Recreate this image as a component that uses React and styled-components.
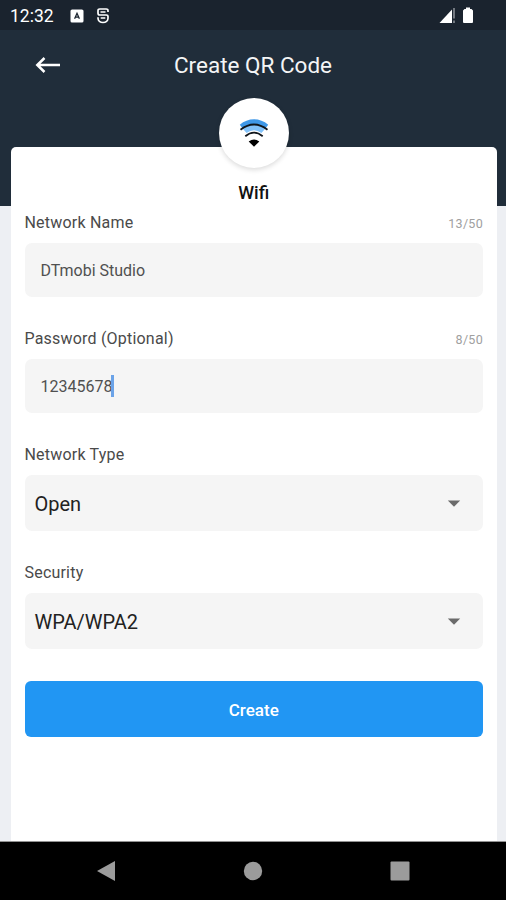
import React from "react";
import { useState } from "react";
import styled, { createGlobalStyle } from "styled-components";

const GlobalStyle = createGlobalStyle`
  body {
    margin: 0;
    font-family: Roboto, "Liberation Sans", sans-serif;
  }

  * {
    box-sizing: border-box;
  }
`;

const Screen = styled.div`
  display: flex;
  flex-direction: column;
  width: 506px;
  height: 900px;
  overflow: hidden;
  background-color: #edeff3;
`;

const StatusBar = styled.div`
  display: flex;
  align-items: center;
  justify-content: space-between;
  flex: none;
  height: 30px;
  padding: 1px 32px 0 10px;
  background-color: #1a232e;
  color: #ffffff;
`;

const StatusGroup = styled.div`
  display: flex;
  align-items: center;
`;

const Clock = styled.span`
  width: 60px;
  font-size: 17.5px;
  line-height: 20px;
`;

const Header = styled.header`
  flex: none;
  height: 176px;
  background-color: #202d3a;
`;

const TitleBar = styled.div`
  display: grid;
  grid-template-columns: 60px 1fr 60px;
  align-items: center;
  height: 70px;
  padding: 0 18px;
`;

const BackButton = styled.button`
  display: flex;
  align-items: center;
  justify-content: center;
  height: 40px;
  padding: 0;
  border: 0;
  background: none;
  cursor: pointer;
`;

const Title = styled.h1`
  margin: 0;
  text-align: center;
  color: #f4f5f6;
  font-size: 22.5px;
  font-weight: 400;
  line-height: 28px;
`;

const Card = styled.main`
  position: relative;
  flex: 1;
  margin: -59px 9px 0 10.5px;
  padding: 34px 14px 0;
  border-radius: 5px 5px 0 0;
  background-color: #ffffff;
`;

const TypeBadge = styled.div`
  position: absolute;
  top: -49px;
  left: 50%;
  display: flex;
  align-items: center;
  justify-content: center;
  width: 70px;
  height: 70px;
  border-radius: 50%;
  background-color: #ffffff;
  box-shadow: 0 2px 5px rgba(0, 0, 0, 0.14);
  transform: translateX(-50%);
`;

const TypeName = styled.h2`
  margin: 0;
  height: 24px;
  text-align: center;
  color: #111111;
  font-size: 18px;
  font-weight: 500;
  line-height: 24px;
`;

const Field = styled.div`
  margin-bottom: ${(props) => props.$gap}px;
`;

const FieldHead = styled.div`
  display: flex;
  align-items: center;
  justify-content: space-between;
  height: 38px;
  padding-bottom: 2px;
`;

const Label = styled.label`
  color: #4a4a4a;
  font-size: 16px;
  line-height: 20px;
  letter-spacing: 0.2px;
`;

const Counter = styled.span`
  color: #a0a0a0;
  font-size: 12.5px;
  letter-spacing: 0.3px;
`;

const TextBox = styled.div`
  display: flex;
  align-items: center;
  height: 54px;
  padding: 1px 16px 0;
  border-radius: 7px;
  background-color: #f5f5f5;
  color: #505050;
  font-size: 16px;
`;

const Caret = styled.span`
  width: 2.5px;
  height: 22px;
  margin: 0 0 2px -1px;
  background-color: #6ba3e8;
`;

const SelectBox = styled.button`
  display: flex;
  align-items: center;
  justify-content: space-between;
  width: 100%;
  height: 56px;
  padding: 2px 22px 0 10px;
  border: 0;
  border-radius: 7px;
  background-color: #f5f5f5;
  color: #222222;
  font-family: inherit;
  font-size: 20px;
  text-align: left;
  cursor: pointer;
`;

const CreateButton = styled.button`
  width: 100%;
  height: 56px;
  padding: 1px 0 0;
  border: 0;
  border-radius: 6px;
  background-color: #2196f3;
  color: #ffffff;
  font-family: inherit;
  font-size: 17px;
  font-weight: 500;
  cursor: pointer;
`;

const NavigationBar = styled.nav`
  display: flex;
  align-items: center;
  justify-content: space-between;
  flex: none;
  height: 59px;
  padding: 0 96px;
  border-top: 1px solid #929292;
  background-color: #000000;
`;

const Icon = styled.svg`
  display: block;
  flex: none;
`;

const KeyboardIcon = () => (
  <Icon width="14" height="14" viewBox="0 0 14 14">
    <rect x="0.5" y="0.5" width="13" height="13" rx="1.6" fill="#fff" />
    <path d="M4.6 9.8 7 4.3l2.4 5.5M5.5 8.2h3" fill="none" stroke="#1a232e" strokeWidth="1.3" />
  </Icon>
);

const ShieldIcon = () => (
  <Icon width="14" height="16" viewBox="0 0 14 16" style={undefined}>
    <path
      d="M12 4V2.7C12 1.7 11.3 1 10.3 1H3.7C2.7 1 2 1.7 2 2.7v2.6C2 6.3 2.6 7 3.7 7h6.6C11.4 7 12 7.6 12 8.6v1.7C12 12.6 9.8 14.5 7 14.5s-5-1.9-5-4.2V9.3"
      fill="none"
      stroke="#fff"
      strokeWidth="1.7"
    />
    <path d="M4.5 4.1h5M4.7 10h4.6" stroke="#fff" strokeWidth="1.5" />
  </Icon>
);

const SignalIcon = () => (
  <Icon width="18" height="17" viewBox="0 0 18 17">
    <path d="M0.5 16 13 2.6V16z" fill="#fff" />
    <path d="M15 1v10.5M15 13.5V16" stroke="#c9ccd0" strokeWidth="1" />
  </Icon>
);

const BatteryIcon = () => (
  <Icon width="12" height="17" viewBox="0 0 12 17">
    <path d="M4 0.5h4V2h1.5L11 3.6V15q0 1-1 1H2q-1 0-1-1V3.6L2.5 2H4z" fill="#fff" />
  </Icon>
);

const BackIcon = () => (
  <Icon width="26" height="18" viewBox="0 0 26 18">
    <path
      d="M9.5 2 2.3 9l7.2 7M2.5 9H25"
      fill="none"
      stroke="#fff"
      strokeWidth="2.5"
    />
  </Icon>
);

const WifiIcon = () => (
  <Icon width="32" height="30" viewBox="0 0 32 30">
    <path d="M1.8 6.8C10 -0.6 22 -0.6 30.2 6.8L27 11Q16 3 5 11z" fill="#3f98e8" />
    <path d="M5 11Q16 2 27 11l-3.6 4Q16 9.4 8.6 15z" fill="#82c2fa" />
    <path d="M2.5 11.8Q16 1.2 29.5 11.8" fill="none" stroke="#10151b" strokeWidth="1.8" />
    <path d="M7.3 18.2Q16 11 24.7 18.2" fill="none" stroke="#10151b" strokeWidth="1.8" />
    <path d="M10.7 23.5Q16 19.3 21.3 23.5L16 28.8z" fill="#000" />
  </Icon>
);

const ArrowDown = () => (
  <Icon width="14" height="8" viewBox="0 0 14 8">
    <path d="M0.8 0.6h12.4L7 6.8z" fill="#6b6b6b" />
  </Icon>
);

const App = () => {
  const [networkName] = useState("DTmobi Studio");
  const [password] = useState("12345678");

  return (
    <>
      <GlobalStyle />
      <Screen>
        <StatusBar>
          <StatusGroup>
            <Clock>12:32</Clock>
            <KeyboardIcon />
            <StatusSpace />
            <ShieldIcon />
          </StatusGroup>
          <StatusGroup>
            <SignalIcon />
            <StatusSpace $small />
            <BatteryIcon />
          </StatusGroup>
        </StatusBar>
        <Header>
          <TitleBar>
            <BackButton aria-label="Back">
              <BackIcon />
            </BackButton>
            <Title>Create QR Code</Title>
          </TitleBar>
        </Header>
        <Card>
          <TypeBadge>
            <WifiIcon />
          </TypeBadge>
          <TypeName>Wifi</TypeName>
          <Field $gap={24}>
            <FieldHead>
              <Label>Network Name</Label>
              <Counter>{networkName.length}/50</Counter>
            </FieldHead>
            <TextBox>{networkName}</TextBox>
          </Field>
          <Field $gap={24}>
            <FieldHead>
              <Label>Password (Optional)</Label>
              <Counter>{password.length}/50</Counter>
            </FieldHead>
            <TextBox>
              {password}
              <Caret />
            </TextBox>
          </Field>
          <Field $gap={24}>
            <FieldHead>
              <Label>Network Type</Label>
            </FieldHead>
            <SelectBox>
              Open
              <ArrowDown />
            </SelectBox>
          </Field>
          <Field $gap={32}>
            <FieldHead>
              <Label>Security</Label>
            </FieldHead>
            <SelectBox>
              WPA/WPA2
              <ArrowDown />
            </SelectBox>
          </Field>
          <CreateButton>Create</CreateButton>
        </Card>
        <NavigationBar>
          <Icon width="20" height="22" viewBox="0 0 20 22">
            <path d="M1 11 19 1v20z" fill="#9b9b9b" />
          </Icon>
          <Icon width="20" height="20" viewBox="0 0 20 20">
            <circle cx="10" cy="10" r="9.2" fill="#9b9b9b" />
          </Icon>
          <Icon width="20" height="20" viewBox="0 0 20 20">
            <rect x="0.5" y="0.5" width="19" height="19" rx="1" fill="#9b9b9b" />
          </Icon>
        </NavigationBar>
      </Screen>
    </>
  );
};

const StatusSpace = styled.span`
  width: ${(props) => (props.$small ? 5 : 12)}px;
`;

export default App;
